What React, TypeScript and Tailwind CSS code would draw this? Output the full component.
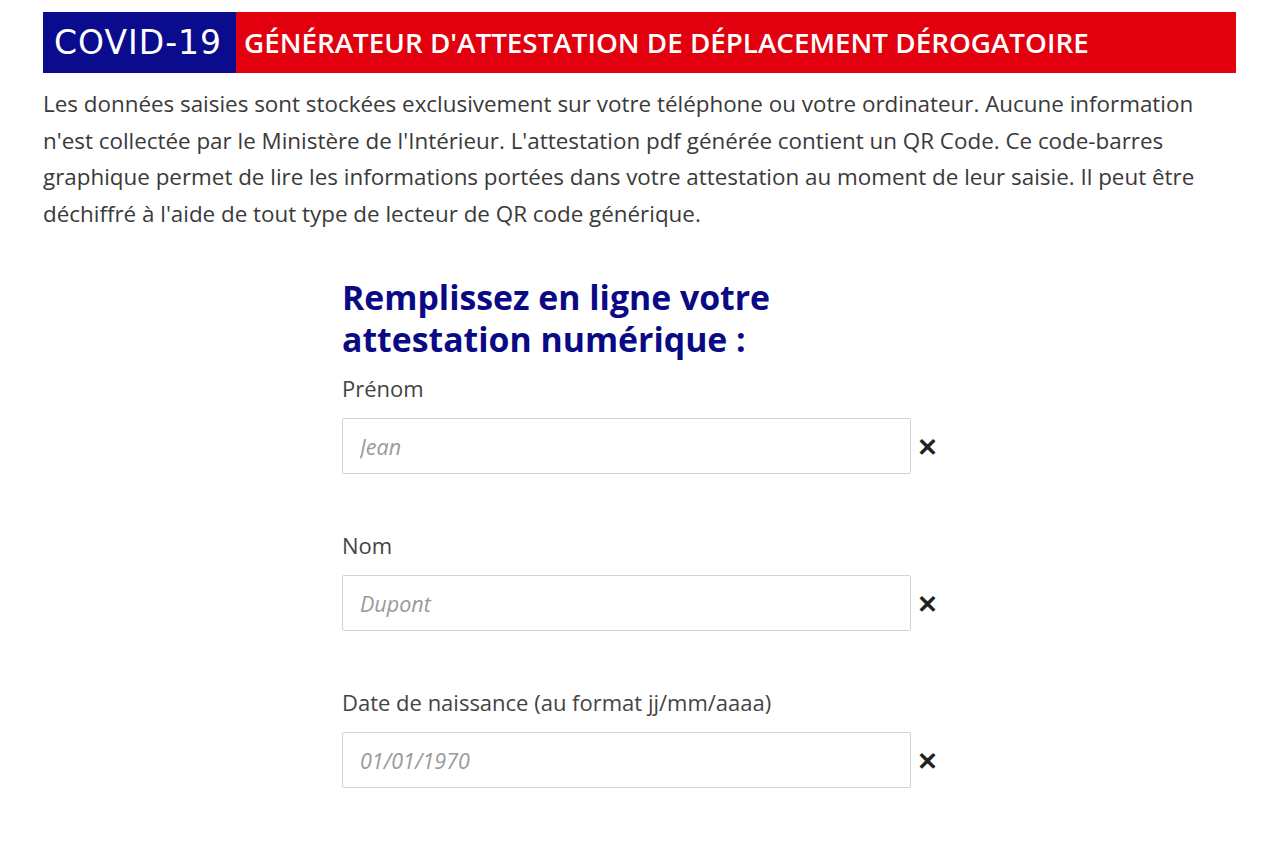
import React from "react";

const Field = ({ label, placeholder, mt }: { label: string; placeholder: string; mt: string }) => (
  <div className={mt}>
    <div className="text-[22px] leading-[28px] text-[#444]">{label}</div>
    <div className="mt-[16px] flex items-center">
      <input
        className="w-[569px] h-[56px] border border-[#d4d4d4] rounded-[2px] px-[17px] text-[21.5px] italic placeholder:text-[#9a9a9a] outline-none"
        placeholder={placeholder}
        style={{ fontFamily: "'Open Sans', sans-serif" }}
      />
      <span className="ml-[6px] text-[25px] font-bold text-[#222] leading-none">✕</span>
    </div>
  </div>
);

export default function App() {
  return (
    <div className="bg-white min-h-[841px] w-[1280px] overflow-hidden" style={{ fontFamily: "'Open Sans', 'Liberation Sans', sans-serif" }}>
      <div className="pt-[12px] px-[43px]">
        <div className="flex h-[61px] w-[1193px]">
          <div className="w-[193px] bg-[#0b0b8d] flex items-center pl-[11px] text-white text-[33px] tracking-[1px] whitespace-nowrap" style={{ fontFamily: "'DejaVu Sans', sans-serif" }}>
            COVID-19
          </div>
          <div className="flex-1 bg-[#e2000e] flex items-center pl-[8px] text-white text-[27.8px] font-semibold whitespace-nowrap">
            GÉNÉRATEUR D'ATTESTATION DE DÉPLACEMENT DÉROGATOIRE
          </div>
        </div>
        <p className="mt-[13px] text-[22.4px] leading-[36.5px] text-[#3a3a3a] whitespace-nowrap">
          Les données saisies sont stockées exclusivement sur votre téléphone ou votre ordinateur. Aucune information<br />
          n'est collectée par le Ministère de l'Intérieur. L'attestation pdf générée contient un QR Code. Ce code-barres<br />
          graphique permet de lire les informations portées dans votre attestation au moment de leur saisie. Il peut être<br />
          déchiffré à l'aide de tout type de lecteur de QR code générique.
        </p>
      </div>
      <div className="ml-[342px] mt-[44px]">
        <h1 className="text-[33.8px] leading-[42px] font-bold text-[#0a0a85]">
          Remplissez en ligne votre<br />attestation numérique :
        </h1>
        <Field label="Prénom" placeholder="Jean" mt="mt-[14px]" />
        <Field label="Nom" placeholder="Dupont" mt="mt-[57px]" />
        <Field label="Date de naissance (au format jj/mm/aaaa)" placeholder="01/01/1970" mt="mt-[57px]" />
      </div>
    </div>
  );
}
